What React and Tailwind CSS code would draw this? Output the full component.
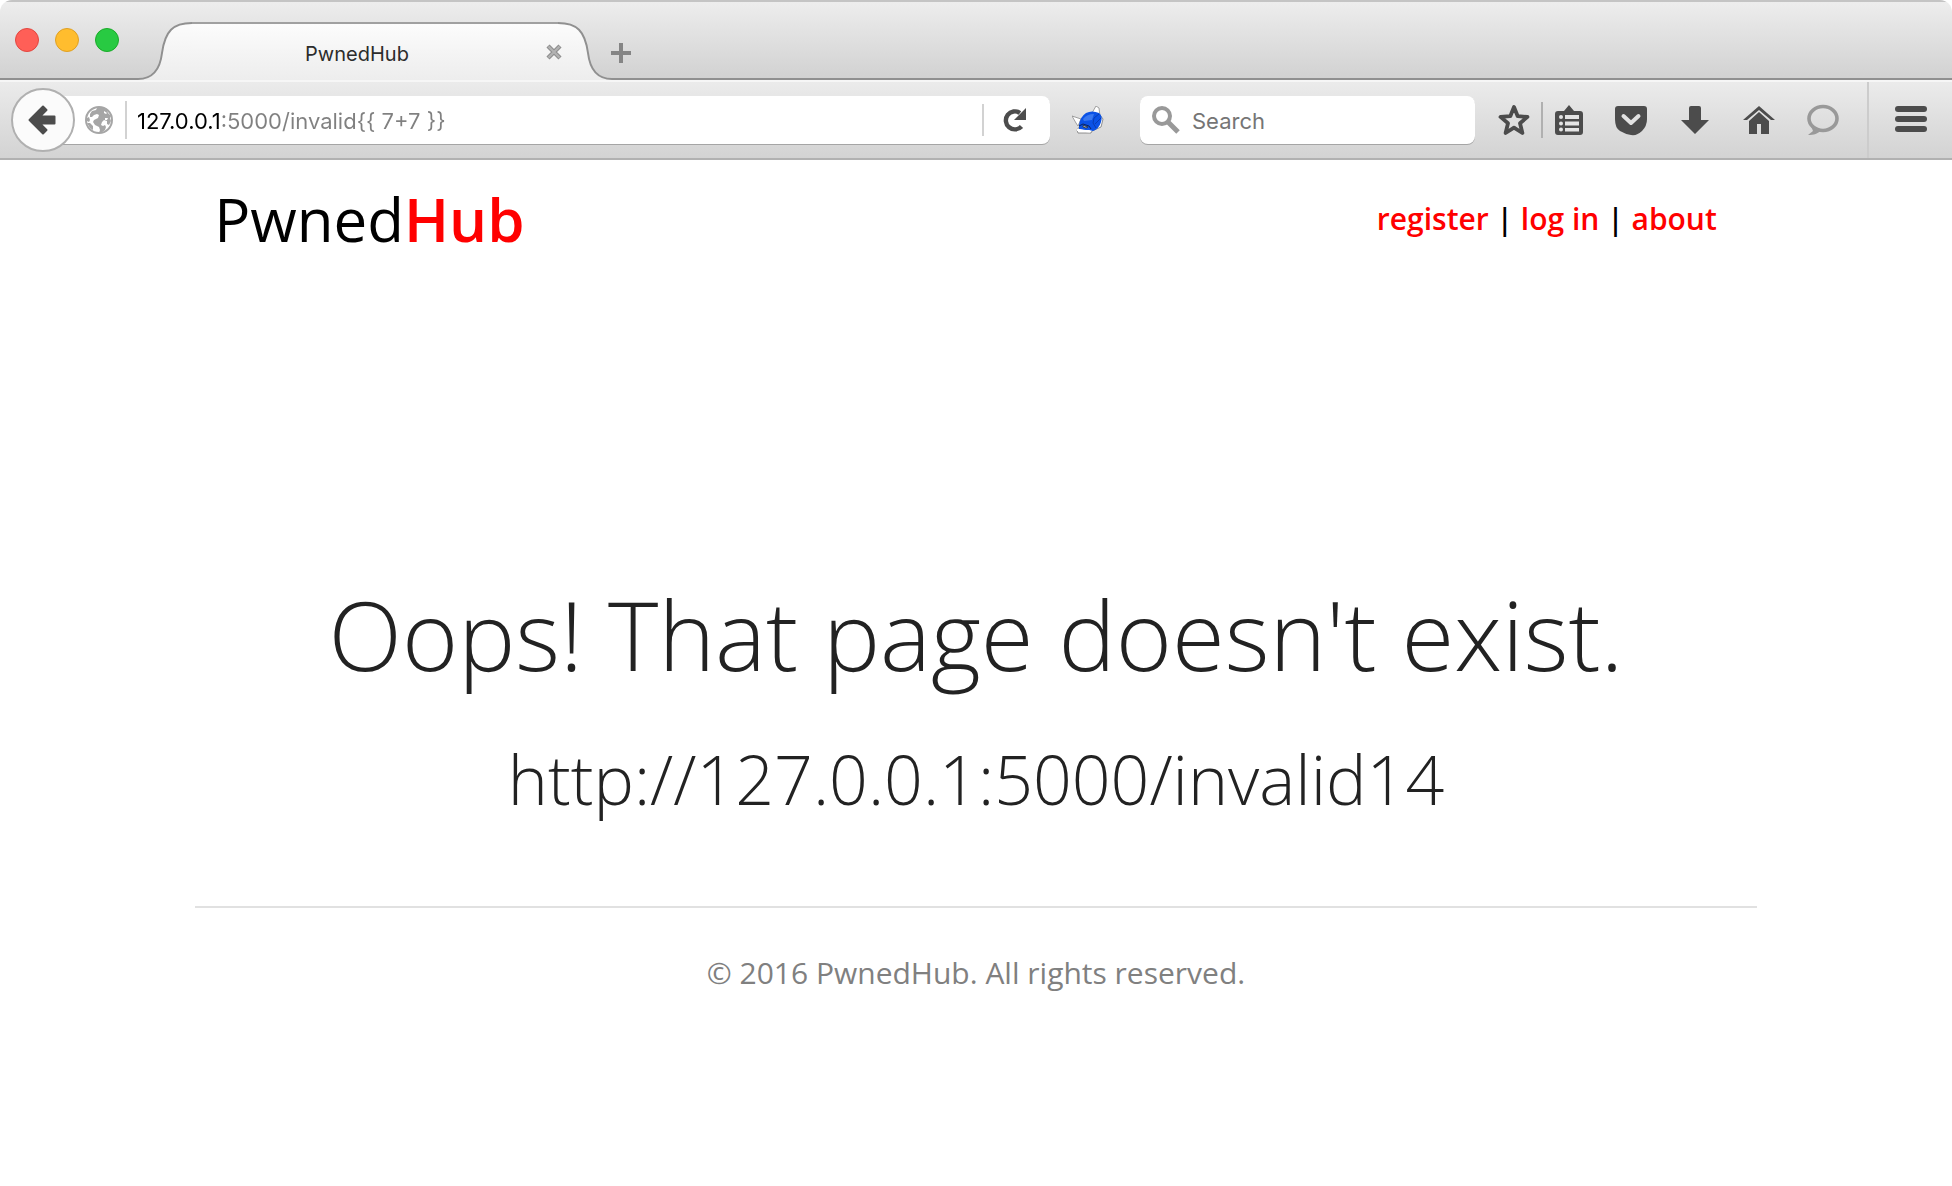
const Curve = ({ flip }) => (
  <svg viewBox="0 0 54 58" className={flip ? "h-[58px] w-[54px] shrink-0 -scale-x-100" : "h-[58px] w-[54px] shrink-0"} aria-hidden="true">
    <path d="M0 57C14 57 22 48 24 31C27 9 35 1 54 1V58H0Z" fill="url(#tabFill)" />
    <path d="M0 57C14 57 22 48 24 31C27 9 35 1 54 1" fill="none" stroke="#909090" strokeWidth="2" />
    <defs>
      <linearGradient id="tabFill" x1="0" y1="0" x2="0" y2="1">
        <stop offset="0" stopColor="#fcfcfc" />
        <stop offset="1" stopColor="#ededed" />
      </linearGradient>
    </defs>
  </svg>
);

const Globe = () => (
  <svg viewBox="0 0 28 28" className="h-7 w-7 shrink-0" aria-hidden="true">
    <circle cx="14" cy="14" r="13" fill="#fff" stroke="#a6a6a6" strokeWidth="2" />
    <path fill="#a6a6a6" d="M12 2l5-1 5 3 1 3 3 3-1 2 1 3-2 4-2-1 0-3-3-1-2 2-1 3 2 1 2-1 1 2-1 3-4 3-2 0 1-3-1-3-4-2-2-3 1-2 4-2 1-3-2-1-3 1-2 2-2 0 0-3 2-3 4-1zM2 12l2-1 1 3-1 2-2-1zM2 17l3 0 3 3 0 4-3-2z" />
    <path fill="#fff" d="M19 5l3 2-1 1-2-1zM20 12l3 0-1 2-2 0z" />
  </svg>
);

const Fox = () => (
  <svg viewBox="0 0 32 28" className="h-7 w-8" aria-hidden="true">
    <path d="M0 10L9 13L6 20L4 17Z" fill="#fff" stroke="#8a8a8a" strokeWidth="0.8" />
    <path d="M20 7L24 0L27 2L28 10Z" fill="#fff" stroke="#8a8a8a" strokeWidth="0.8" />
    <path d="M28 9L31 13L29 21L20 25L19 27L6 27L5 24L8 20Z" fill="#fff" stroke="#777" strokeWidth="0.8" />
    <path d="M7 19Q8 11 14 7Q20 4 27 7Q31 10 29 16Q27 23 21 25L17 24L12 24L7 23Z" fill="#0b52e6" />
    <path d="M11 13Q15 8 22 8L20 14L12 15Z" fill="#3a78f0" />
    <path d="M27 8L22 12L21 17L24 22M29 12L23 18" stroke="#083cb4" strokeWidth="1" fill="none" />
    <path d="M7 20L11 18L17 20L19 23" stroke="#0a2460" strokeWidth="1" fill="none" />
    <path d="M11 19.500L16 21L14 22L11 21Z" fill="#d8d8c8" stroke="#222" strokeWidth="0.7" />
    <path d="M5 24L18 25.500" stroke="#fff" strokeWidth="1.800" />
  </svg>
);

const Icon = ({ box = "0 0 32 32", children }) => (
  <svg viewBox={box} className="h-8 w-8" fill="#4c4c4c" aria-hidden="true">{children}</svg>
);

const Tool = ({ label, children }) => (
  <button type="button" aria-label={label} className="flex h-12 w-16 items-center justify-center">{children}</button>
);

export default function App() {
  return (
    <div className="flex min-h-screen flex-col overflow-hidden rounded-xl bg-white font-['Inter',sans-serif]">
      <header>
        <div className="flex h-20 items-end border-t-2 border-t-[#c4c4c4] bg-linear-to-b from-[#ededed] to-[#d1d1d1]">
          <div className="flex h-[78px] w-[138px] shrink-0 items-center gap-4 border-b-2 border-[#909090] pl-[15px]">
            <button type="button" aria-label="Close window" className="h-6 w-6 rounded-full border border-[#e2463f] bg-[#ff5f57]" />
            <button type="button" aria-label="Minimize window" className="h-6 w-6 rounded-full border border-[#dfa023] bg-[#ffbd2e]" />
            <button type="button" aria-label="Zoom window" className="h-6 w-6 rounded-full border border-[#1aab29] bg-[#28ca42]" />
          </div>
          <Curve />
          <div className="flex h-[58px] w-[366px] items-center border-t-2 border-[#a0a0a0] bg-linear-to-b from-[#fcfcfc] to-[#ededed]">
            <span className="flex-1 pt-1 pr-6 text-center text-xl text-[#2c2c2c]">PwnedHub</span>
            <button type="button" aria-label="Close tab" className="relative z-10 -mr-1">
              <svg viewBox="0 0 16 16" className="h-4 w-4" aria-hidden="true">
                <path d="M2 2L14 14M14 2L2 14" stroke="#8e8e8e" strokeWidth="4.4" />
                <path d="M2.5 2.5L13.5 13.5M13.5 2.5L2.5 13.5" stroke="#b2b2b2" strokeWidth="2.2" />
              </svg>
            </button>
          </div>
          <Curve flip />
          <div className="flex h-[78px] flex-1 items-center border-b-2 border-[#909090]">
            <button type="button" aria-label="New tab" className="-ml-px pt-[26px]">
              <svg viewBox="0 0 20 20" className="h-5 w-5" aria-hidden="true"><path d="M8 0h4v8h8v4h-8v8h-4v-8H0V8h8z" fill="#858585" /></svg>
            </button>
          </div>
        </div>

        <div className="flex h-20 items-center border-t-2 border-b-2 border-t-[#f6f6f6] border-b-[#b1b1b1] bg-linear-to-b from-[#ebebeb] to-[#d3d3d3] pl-[11px]">
          <button type="button" aria-label="Back" className="z-10 flex h-16 w-16 shrink-0 items-center justify-center rounded-full border-2 border-[#b0b0b0] bg-[#fbfbfb] pr-[2px]">
            <svg viewBox="0 0 28 30" className="h-[30px] w-7" aria-hidden="true">
              <path d="M1.500 15L15 1.500L18.500 5L12 11.500H26.500V18.500H12L18.500 25L15 28.500Z" fill="#4c4c4c" stroke="#4c4c4c" strokeWidth="2" strokeLinejoin="round" />
            </svg>
          </button>
          <div className="-ml-8 flex h-12 flex-1 items-center rounded-r-lg bg-white pl-[42px] shadow-[0_1px_0_#a5a5a5]">
            <Globe />
            <span className="ml-3 h-[38px] w-[2px] bg-[#d2d2d2]" />
            <input aria-label="Address" defaultValue="127.0.0.1:5000/invalid{{ 7+7 }}" className="ml-[10px] h-10 min-w-0 flex-1 bg-[linear-gradient(to_right,#000_85px,#808080_85px)] bg-clip-text pt-[2px] text-[22px] text-transparent outline-none" />
            <button type="button" aria-label="Reload" className="flex h-8 w-[68px] items-center justify-center border-l-2 border-[#d2d2d2] pr-1">
              <svg viewBox="0 0 24 24" className="h-6 w-6" aria-hidden="true">
                <path d="M18.500 18.500A9 9 0 1 1 17 5" fill="none" stroke="#4c4c4c" strokeWidth="4.400" />
                <path d="M23 0V12H11Z" fill="#4c4c4c" />
              </svg>
            </button>
          </div>
          <button type="button" aria-label="FoxyProxy" className="flex w-[90px] justify-center pr-[14px]"><Fox /></button>
          <label className="flex h-12 w-[335px] items-center rounded-lg bg-white pl-3 shadow-[0_1px_0_#a5a5a5]">
            <svg viewBox="0 0 28 28" className="h-7 w-7 shrink-0" fill="none" stroke="#999" aria-hidden="true">
              <circle cx="10" cy="10" r="8" strokeWidth="4" /><path d="M16 16L26 26" strokeWidth="5" />
            </svg>
            <input type="search" aria-label="Search" placeholder="Search" className="ml-3 min-w-0 flex-1 pt-[2px] text-[22px] outline-none placeholder:text-[#757575]" />
          </label>
          <div className="ml-2 flex items-center">
            <button type="button" aria-label="Bookmark this page" className="flex h-12 w-[62px] items-center justify-center"><Icon><path d="M16 3L19.700 12.200L29.500 12.900L22 19.200L24.400 29L16 23.700L7.600 29L10 19.200L2.500 12.900L12.300 12.200Z" fill="none" stroke="#4c4c4c" strokeWidth="3.800" strokeLinejoin="round" /></Icon></button>
            <span className="-ml-1 h-9 w-[2px] bg-[#b0b0b0]" />
            <button type="button" aria-label="Bookmarks" className="flex w-[52px] justify-center">
              <Icon>
                <path d="M11 7L16 1L21 7H27Q30 7 30 10V28Q30 31 27 31H5Q2 31 2 28V10Q2 7 5 7Z" />
                <g fill="#e4e4e4"><path d="M12 11h14v4H12zM12 17.500h14v4H12zM12 24h14v3.500H12z" /><circle cx="8" cy="13" r="2" /><circle cx="8" cy="19.500" r="2" /><circle cx="8" cy="25.500" r="2" /></g>
              </Icon>
            </button>
            <button type="button" aria-label="Pocket" className="ml-1 flex h-12 w-16 items-center justify-center">
              <Icon><path d="M3 2H29Q32 2 32 5V15Q32 22 27 27T16 31T5 27T0 15V5Q0 2 3 2Z" /><path d="M8.500 12L16 19L23.500 12" fill="none" stroke="#e2e2e2" strokeWidth="4" strokeLinecap="round" strokeLinejoin="round" /></Icon>
            </button>
            <Tool label="Downloads"><Icon><path d="M12 2H20Q22 2 22 4V16H30L16 30L2 16H10V4Q10 2 12 2Z" /></Icon></Tool>
            <Tool label="Home"><Icon><path d="M16 2L32 16H28L16 6L4 16H0Z" /><path d="M16 8L26 17V30H18V20H14V30H6V17Z" /></Icon></Tool>
            <Tool label="Hello"><Icon><ellipse cx="16" cy="14.500" rx="14" ry="12" fill="none" stroke="#999" strokeWidth="3.600" /><path d="M4 22L6 27L1 31C7 31 11 30 14 26Z" fill="#999" /></Icon></Tool>
          </div>
          <button type="button" aria-label="Open menu" className="ml-3 flex h-[76px] w-[85px] items-center justify-center border-l-2 border-[#cccccc]">
            <Icon><rect y="2" width="32" height="6" rx="3" /><rect y="12" width="32" height="6" rx="3" /><rect y="22" width="32" height="6" rx="3" /></Icon>
          </button>
        </div>
      </header>

      <div className="mx-auto w-4/5 font-['Open_Sans',sans-serif] text-[#222]">
        <div className="flex items-center justify-between pt-[19px] pr-10 pl-[19px] text-black">
          <a href="#home" className="text-[60px] leading-[80px]">Pwned<b className="font-semibold text-[#f00]">Hub</b></a>
          <nav className="pb-[2px] text-[30px] font-semibold">
            <a href="#register" className="text-[#f00]">register</a> | <a href="#login" className="text-[#f00]">log in</a> | <a href="#about" className="text-[#f00]">about</a>
          </nav>
        </div>
        <main className="pt-[315px] text-center font-light">
          <h1 className="text-[96px] leading-[120px]">Oops! That page doesn't exist.</h1>
          <h3 className="mt-[38px] text-[68px] leading-[94px]">http://127.0.0.1:5000/invalid14</h3>
        </main>
        <footer className="mt-20 border-t-2 border-[#e1e1e1] pt-[43px] text-center text-[30px] leading-[44px] text-[#808080]">© 2016 PwnedHub. All rights reserved.</footer>
      </div>
    </div>
  );
}
